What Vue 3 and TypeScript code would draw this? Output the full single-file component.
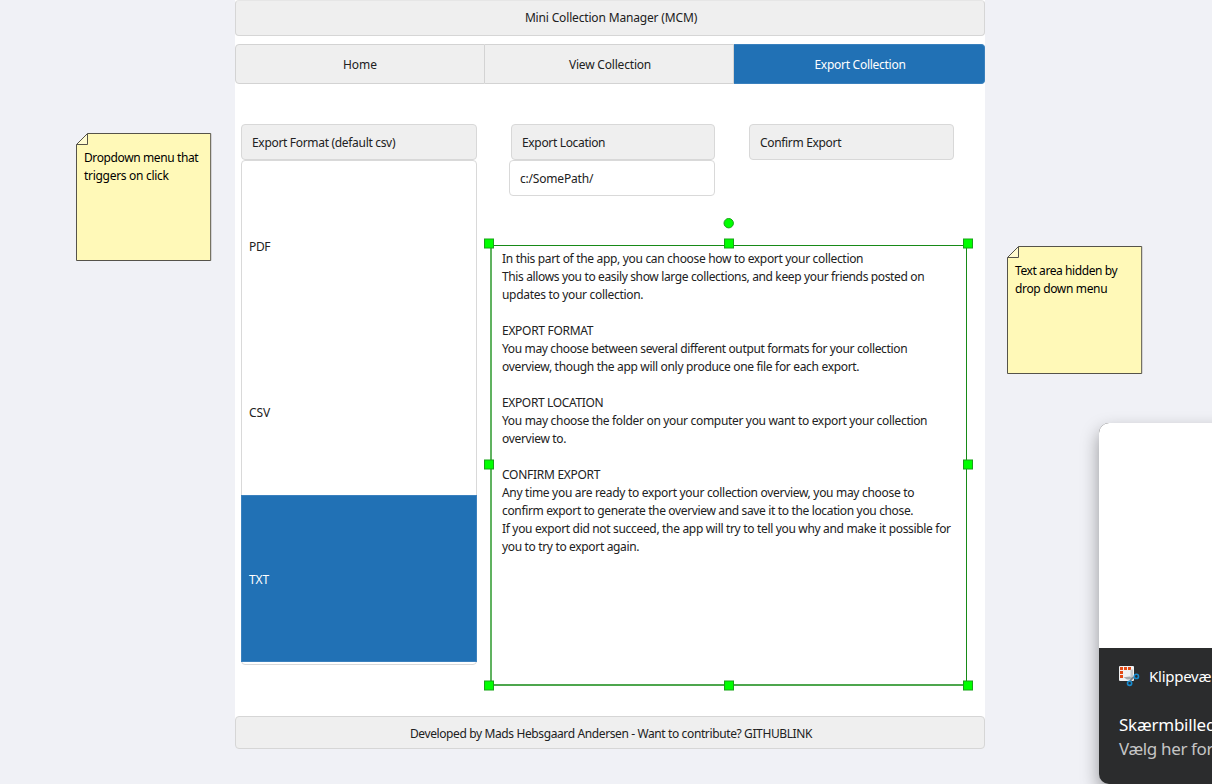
<script setup lang="ts">
interface Line { text: string; width: number }

const tabs = [
  { label: 'Home', width: 34, active: false },
  { label: 'View Collection', width: 82, active: false },
  { label: 'Export Collection', width: 91, active: true },
]
const formats = [
  { label: 'PDF', width: 21, active: false },
  { label: 'CSV', width: 21, active: false },
  { label: 'TXT', width: 20, active: true },
]
const help: Line[] = [
  { text: 'In this part of the app, you can choose how to export your collection', width: 361 },
  { text: 'This allows you to easily show large collections, and keep your friends posted on', width: 422 },
  { text: 'updates to your collection.', width: 141 },
  { text: '', width: 0 },
  { text: 'EXPORT FORMAT', width: 91 },
  { text: 'You may choose between several different output formats for your collection', width: 405 },
  { text: 'overview, though the app will only produce one file for each export.', width: 357 },
  { text: '', width: 0 },
  { text: 'EXPORT LOCATION', width: 101 },
  { text: 'You may choose the folder on your computer you want to export your collection', width: 425 },
  { text: 'overview to.', width: 64 },
  { text: '', width: 0 },
  { text: 'CONFIRM EXPORT', width: 98 },
  { text: 'Any time you are ready to export your collection overview, you may choose to', width: 412 },
  { text: 'confirm export to generate the overview and save it to the location you chose.', width: 411 },
  { text: 'If you export did not succeed, the app will try to tell you why and make it possible for', width: 448.5 },
  { text: 'you to try to export again.', width: 137 },
]
const notes = [
  { cls: 'note-left', lines: [{ text: 'Dropdown menu that', width: 114 }, { text: 'triggers on click', width: 84.5 }] },
  { cls: 'note-right', lines: [{ text: 'Text area hidden by', width: 102 }, { text: 'drop down menu', width: 92 }] },
]
const handles = [
  [0, 0], [240, 0], [479, 0],
  [0, 221], [479, 221],
  [0, 442], [240, 442], [479, 442],
]

// Tracks a label so that it spans the given width in pixels.
const vFit = {
  mounted(el: HTMLElement, binding: { value: number }) {
    const count = (el.textContent ?? '').length
    if (!count || !binding.value) return
    const natural = el.getBoundingClientRect().width
    el.style.letterSpacing = `${(binding.value + 0.2 - natural) / count}px`
  },
}
</script>

<template>
  <div class="canvas">
    <main class="window">
      <header class="bar title"><span v-fit="172">Mini Collection Manager (MCM)</span></header>
      <nav class="tabs">
        <div v-for="t in tabs" :key="t.label" class="tab" :class="{ active: t.active }">
          <span v-fit="t.width">{{ t.label }}</span>
        </div>
      </nav>
      <section class="content">
        <div class="format">
          <div class="box"><span v-fit="143">Export Format (default csv)</span></div>
          <div class="list">
            <div v-for="f in formats" :key="f.label" class="option" :class="{ active: f.active }">
              <span v-fit="f.width">{{ f.label }}</span>
            </div>
          </div>
        </div>
        <div class="side">
          <div class="fields">
            <div class="location">
              <div class="box"><span v-fit="83">Export Location</span></div>
              <div class="input"><span v-fit="73">c:/SomePath/</span></div>
            </div>
            <div class="box confirm"><span v-fit="81">Confirm Export</span></div>
          </div>
          <div class="textarea">
            <div v-for="(l, i) in help" :key="i" class="line"><span v-fit="l.width">{{ l.text }}</span></div>
            <svg class="selection" width="492" height="476" viewBox="0 0 492 476">
              <circle cx="244.7" cy="5.2" r="4.7" />
              <rect v-for="(h, i) in handles" :key="i" :x="h[0] + 0.5" :y="h[1] + 21" width="9" height="9" />
            </svg>
          </div>
        </div>
      </section>
      <footer class="bar foot"><span v-fit="402">Developed by Mads Hebsgaard Andersen - Want to contribute? GITHUBLINK</span></footer>
    </main>

    <aside v-for="n in notes" :key="n.cls" class="note" :class="n.cls">
      <svg class="paper" width="136" height="129" viewBox="0 0 136 129">
        <path d="M11.5.5H134.7V127.5H.5V11.5Z" fill="#fff9b8" />
        <path d="M11.5.5V11.5H.5Z" fill="#fffbd0" />
        <path d="M11.5.5H134.7V127.5H.5V11.5ZM11.5.5V11.5H.5" fill="none" stroke="#55534a" />
      </svg>
      <div class="note-text">
        <div v-for="l in n.lines" :key="l.text"><span v-fit="l.width">{{ l.text }}</span></div>
      </div>
    </aside>

    <aside class="toast">
      <div class="preview"></div>
      <div class="message">
        <div class="app">
          <svg width="22" height="22" viewBox="0 0 22 22">
            <rect x="0" y="1" width="15" height="15" rx="1" fill="#f0f1f2" />
            <g fill="#e24a16">
              <rect x="1" y="2" width="3" height="3" />
              <rect x="5" y="2" width="3" height="3" />
              <rect x="9" y="2" width="3" height="3" />
              <rect x="1" y="6" width="3" height="3" />
              <rect x="1" y="10" width="3" height="3" />
            </g>
            <path d="M11.5 4.5H14V14L11 15.5L11.5 11Z" fill="#c3c7ca" />
            <path d="M4.5 12.2L11 11.5L14 14.5H8Z" fill="#a5abb0" />
            <path d="M11 16.5L13 13.5L15.5 12" fill="none" stroke="#757e85" stroke-width="1.7" />
            <circle cx="17.4" cy="11.4" r="2.1" fill="none" stroke="#168bd0" stroke-width="1.6" />
            <circle cx="10.6" cy="18.3" r="2.1" fill="none" stroke="#168bd0" stroke-width="1.6" />
          </svg>
          <span v-fit="62">Klippevæ</span>
        </div>
        <div class="headline"><span v-fit="97">Skærmbilled</span></div>
        <div class="hint"><span v-fit="94">Vælg her for</span></div>
      </div>
    </aside>
  </div>
</template>

<style>
html, body { margin: 0; overflow: hidden; background: #f0f1f6; }
</style>

<style scoped>
.canvas {
  position: relative;
  width: 1212px;
  height: 784px;
  overflow: hidden;
  background: #f0f1f6;
  color: #212121;
  font: 12px/18px "Noto Sans", "Open Sans", sans-serif;
  white-space: nowrap;
}
.canvas * { box-sizing: border-box; }
span { display: inline-block; }
.window {
  display: flex;
  flex-direction: column;
  width: 750px;
  height: 749px;
  margin-left: 235px;
  background: linear-gradient(#fff 0 720px, #f0f1f6 720px);
}
.bar {
  display: flex;
  justify-content: center;
  align-items: center;
  background: #efefef;
  border: 1px solid #d6d6d6;
  border-radius: 4px;
}
.title { height: 36px; padding-left: 2px; border-top-color: #e6e6e6; }
.tabs { display: grid; grid-template-columns: 250px 249px 251px; height: 40px; margin-top: 8px; }
.tab {
  display: flex;
  justify-content: center;
  align-items: center;
  padding-top: 2px;
  background: #efefef;
  border: 1px solid #d3d3d3;
}
.tab + .tab { padding-left: 2px; border-left-width: 0; }
.tab:first-child { border-radius: 4px 0 0 4px; }
.tab:last-child { border-radius: 0 4px 4px 0; }
.tab.active { background: #2171b5; border-color: #3980bd; color: #fff; }
.content { display: flex; height: 632px; padding: 40px 0 0 6px; }
.format { width: 236px; }
.box {
  display: flex;
  align-items: center;
  height: 36px;
  padding: 1px 0 0 10px;
  background: #efefef;
  border: 1px solid #d8d8d8;
  border-radius: 4px;
}
.list {
  display: grid;
  grid-template-rows: 168px 166px 167px;
  height: 505px;
  border: 1px solid #d9d9d9;
  border-radius: 4px;
}
.option { display: flex; align-items: center; padding: 4px 0 0 7px; }
.option:nth-child(2) { padding-top: 2px; }
.option.active { margin: 0 -1px; padding: 2px 0 0 7px; background: #2171b5; border: 1px solid #3b81be; color: #fff; }
.side { padding-left: 13px; }
.fields { display: flex; gap: 34px; padding-left: 19px; height: 72px; }
.location { width: 206px; }
.location .box { margin-left: 2px; }
.confirm { width: 205px; }
.input {
  display: flex;
  align-items: center;
  height: 36px;
  padding: 2px 0 0 10px;
  background: #fff;
  border: 1px solid #d9d9d9;
  border-radius: 4px;
}
.textarea {
  position: relative;
  width: 477px;
  height: 441px;
  margin-top: 49px;
  padding: 4px 0 0 10px;
  border: 1px solid #178a17;
  border-left: 2px solid #60b260;
  border-bottom: 2px solid #4da64d;
}
.line { height: 18px; }
.selection { position: absolute; left: -8px; top: -28px; }
.selection rect, .selection circle { fill: #00ff00; stroke: #19a319; stroke-width: 1; }
.foot { height: 33px; padding: 3px 0 0 2px; }
.note { position: absolute; color: #000; }
.note-left { left: 76px; top: 133px; }
.note-right { left: 1007px; top: 246px; }
.paper { display: block; }
.note-text { position: absolute; left: 8px; top: 16px; }
.toast {
  position: absolute;
  left: 1099px;
  top: 423px;
  width: 360px;
  height: 361px;
  overflow: hidden;
  border-radius: 10px;
  background: #2b2c2d;
  box-shadow: 0 8px 18px rgba(0, 0, 0, 0.38);
}
.preview { height: 225px; background: #fff; }
.message { padding: 17px 0 0 20px; color: #fff; }
.app { display: flex; align-items: center; gap: 8px; height: 22px; font-size: 15px; }
.headline { margin-top: 26px; font-size: 17px; line-height: 24px; }
.hint { font-size: 17px; line-height: 24px; color: #c5c5c5; }
</style>
